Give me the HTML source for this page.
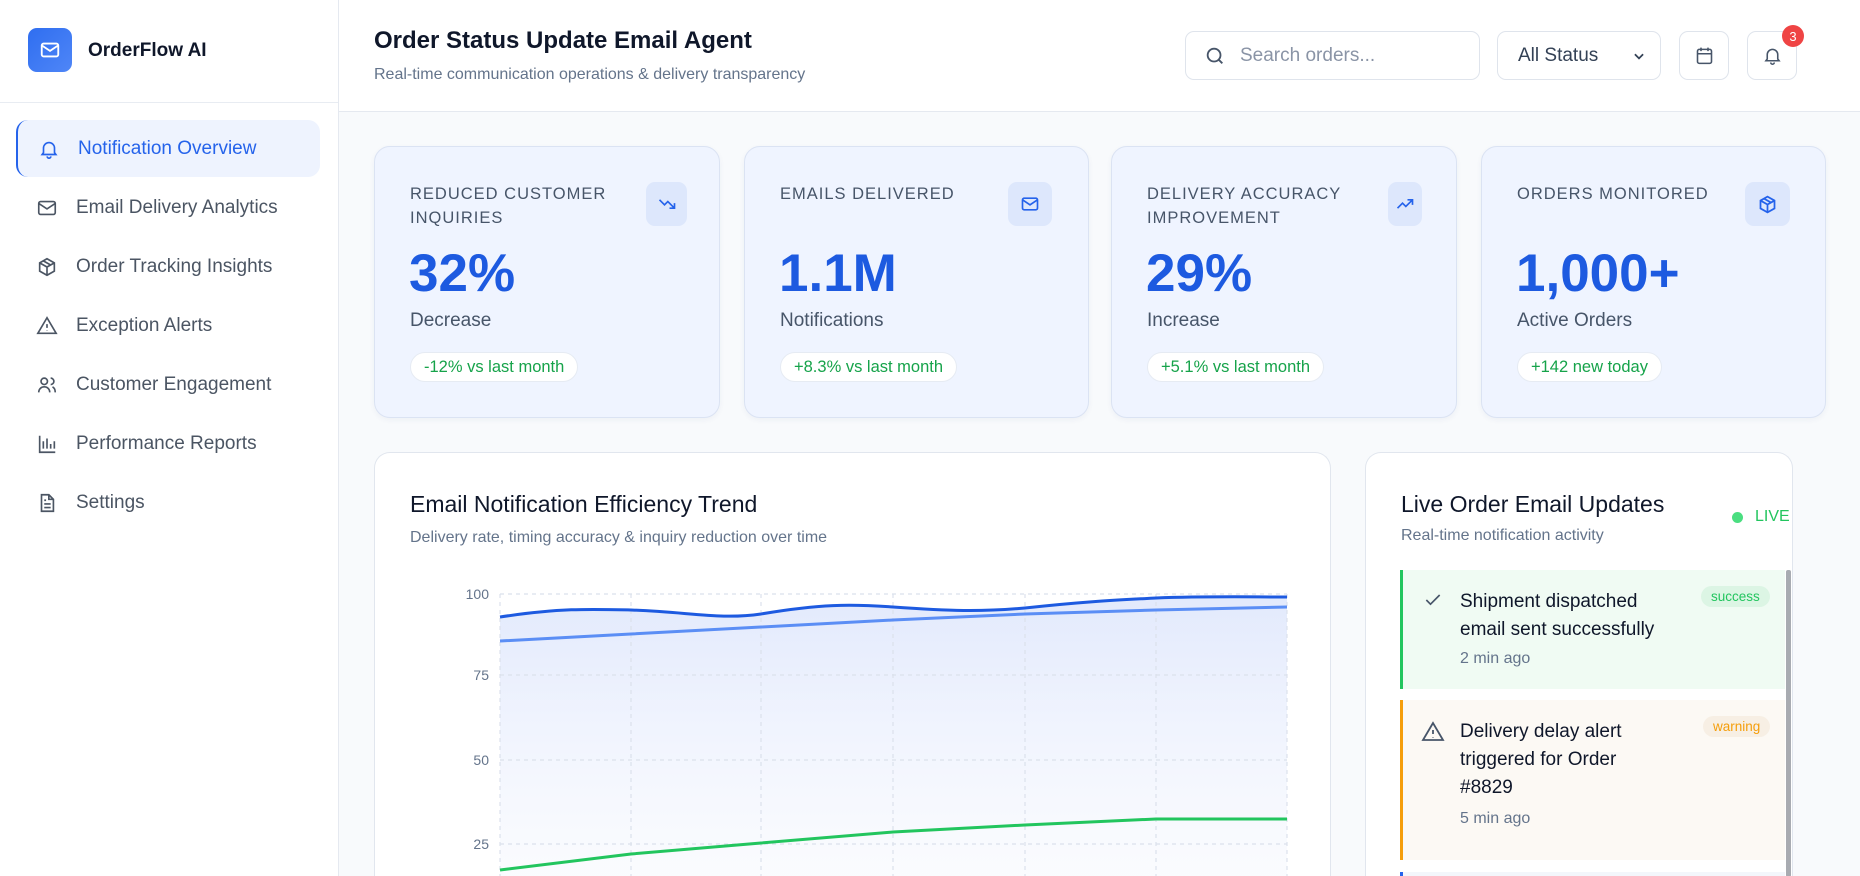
<!DOCTYPE html>
<html style="overflow:hidden;height:876px"><head><meta charset="utf-8"><style>
*{box-sizing:border-box;margin:0;padding:0}
body{width:1860px;height:876px;overflow:hidden;background:#fff;font-family:"Liberation Sans",sans-serif;color:#0f172a;position:relative}
.side{position:absolute;left:0;top:0;width:339px;height:876px;background:#fff;border-right:1px solid #e5e9f0}
.logo{position:absolute;left:28px;top:28px;width:44px;height:44px;border-radius:9px;background:linear-gradient(135deg,#2f6ef0,#4f86f7);display:flex;align-items:center;justify-content:center}
.brand{position:absolute;left:88px;top:40px;font-size:19px;font-weight:bold;color:#0f172a}
.sdiv{position:absolute;left:0;top:102px;width:338px;border-top:1px solid #e8ecf2}
.nav{position:absolute;left:16px;width:304px;height:57px;display:flex;align-items:center;padding-left:20px;font-size:19px;color:#4b5563;border-radius:12px}
.nav svg{margin-right:18px}
.nav.act{background:#eef3fe;color:#2563eb;border-left:2px solid #2563eb}
.main{position:absolute;left:339px;top:0;right:0;height:876px;background:#f8fafc;overflow:hidden}
.hdr{position:absolute;left:0;top:0;right:0;height:112px;background:#fff;border-bottom:1px solid #e5e9f0}
.h1{position:absolute;left:35px;top:27px;font-size:24px;font-weight:bold}
.h2{position:absolute;left:35px;top:66px;font-size:16px;color:#64748b}
.box{position:absolute;top:31px;height:49px;border:1px solid #dfe4ec;border-radius:9px;background:#fff;display:flex;align-items:center;justify-content:center}
.card{position:absolute;top:146px;width:346px;height:272px;background:#eff4ff;border:1px solid #dbe3f3;border-radius:16px;box-shadow:0 2px 6px rgba(30,60,120,.05)}
.lbl{position:absolute;left:35px;top:35px;width:210px;font-size:16.5px;letter-spacing:1px;color:#475569;line-height:24px}
.ic{position:absolute;left:271px;top:35px;width:41px;height:44px;border-radius:9px;background:#dde7fc;display:flex;align-items:center;justify-content:center}
.big{position:absolute;left:34px;top:96px;font-size:53px;font-weight:bold;color:#1d5ae0}
.sub{position:absolute;left:35px;top:163px;font-size:19px;color:#475569}
.pill{position:absolute;left:35px;top:205px;height:30px;padding:0 13px;border-radius:15px;background:#fff;color:#16a34a;font-size:16.5px;display:flex;align-items:center;border:1px solid #e6ebf3}
.pnl{position:absolute;top:452px;height:424px;background:#fff;border:1px solid #e1e6ee;border-bottom:none;border-radius:16px 16px 0 0;overflow:hidden}
</style></head><body>
<div class="side">
 <div class="logo"><svg width="22" height="22" viewBox="0 0 24 24" fill="none" stroke="#fff" stroke-width="2"><rect x="3" y="5" width="18" height="14" rx="2"/><path d="M3 7l9 6 9-6"/></svg></div>
 <div class="brand">OrderFlow AI</div>
 <div class="sdiv"></div>
 <div class="nav act" style="top:120px"><svg width="22" height="22" viewBox="0 0 24 24" fill="none" stroke="#2563eb" stroke-width="1.8"><path d="M6 16V11a6 6 0 0112 0v5l1.5 2h-15z"/><path d="M10 20a2 2 0 004 0"/></svg>Notification Overview</div>
 <div class="nav" style="top:179px"><svg width="22" height="22" viewBox="0 0 24 24" fill="none" stroke="#4b5563" stroke-width="1.8"><rect x="3" y="5" width="18" height="14" rx="2"/><path d="M3 7l9 6 9-6"/></svg>Email Delivery Analytics</div>
 <div class="nav" style="top:238px"><svg width="22" height="22" viewBox="0 0 24 24" fill="none" stroke="#4b5563" stroke-width="1.8"><path d="M12 3l8 4.5v9L12 21l-8-4.5v-9z"/><path d="M4 7.5l8 4.5 8-4.5M12 12v9M8 5.3l8 4.5"/></svg>Order Tracking Insights</div>
 <div class="nav" style="top:297px"><svg width="22" height="22" viewBox="0 0 24 24" fill="none" stroke="#4b5563" stroke-width="1.8"><path d="M12 3L2 20h20z"/><path d="M12 10v4M12 17v.5"/></svg>Exception Alerts</div>
 <div class="nav" style="top:356px"><svg width="22" height="22" viewBox="0 0 24 24" fill="none" stroke="#4b5563" stroke-width="1.8"><circle cx="9" cy="8" r="3.5"/><path d="M3 20c0-4 3-6 6-6s6 2 6 6M16 4.5a3.5 3.5 0 010 7M18 14c2 1 3 3 3 6"/></svg>Customer Engagement</div>
 <div class="nav" style="top:415px"><svg width="22" height="22" viewBox="0 0 24 24" fill="none" stroke="#4b5563" stroke-width="1.8"><path d="M4 3v18h17M8 17V9M12 17V6M16 17v-5M20 17v-8"/></svg>Performance Reports</div>
 <div class="nav" style="top:474px"><svg width="22" height="22" viewBox="0 0 24 24" fill="none" stroke="#4b5563" stroke-width="1.8"><path d="M6 3h8l5 5v13H6z"/><path d="M14 3v5h5M9 13h7M9 17h7M9 9h2"/></svg>Settings</div>
</div>
<div class="main">
 <div class="hdr">
  <div class="h1">Order Status Update Email Agent</div>
  <div class="h2">Real-time communication operations &amp; delivery transparency</div>
  <div class="box" style="left:846px;width:295px;justify-content:flex-start;padding-left:18px"><svg width="22" height="22" viewBox="0 0 24 24" fill="none" stroke="#475569" stroke-width="2"><circle cx="11" cy="11" r="7"/><path d="M16 16l4 4"/></svg><span style="margin-left:14px;font-size:19px;color:#8a94a6">Search orders...</span></div>
  <div class="box" style="left:1158px;width:164px;justify-content:space-between;padding:0 14px 0 20px;font-size:19px;color:#334155">All Status<svg width="14" height="14" viewBox="0 0 24 24" fill="none" stroke="#334155" stroke-width="3"><path d="M5 9l7 7 7-7"/></svg></div>
  <div class="box" style="left:1340px;width:50px"><svg width="21" height="21" viewBox="0 0 24 24" fill="none" stroke="#475569" stroke-width="1.8"><rect x="4" y="5" width="16" height="16" rx="2"/><path d="M4 10h16M8 3v4M16 3v4"/></svg></div>
  <div class="box" style="left:1408px;width:50px"><svg width="21" height="21" viewBox="0 0 24 24" fill="none" stroke="#475569" stroke-width="1.8"><path d="M6 16V11a6 6 0 0112 0v5l1.5 2h-15z"/><path d="M10 20a2 2 0 004 0"/></svg></div>
  <div style="position:absolute;left:1443px;top:25px;width:22px;height:22px;border-radius:11px;background:#ef4444;color:#fff;font-size:13px;display:flex;align-items:center;justify-content:center">3</div>
 </div>
 <div class="card" style="left:35px"><div class="lbl">REDUCED CUSTOMER INQUIRIES</div><div class="ic"><svg width="20" height="20" viewBox="0 0 24 24" fill="none" stroke="#2563eb" stroke-width="2"><path d="M3 7l6 6 4-4 8 8M15 17h6v-6"/></svg></div><div class="big">32%</div><div class="sub">Decrease</div><div class="pill">-12% vs last month</div></div>
 <div class="card" style="left:405px;width:345px"><div class="lbl">EMAILS DELIVERED</div><div class="ic" style="width:44px;left:263px"><svg width="20" height="20" viewBox="0 0 24 24" fill="none" stroke="#2563eb" stroke-width="2"><rect x="3" y="5" width="18" height="14" rx="2"/><path d="M3 7l9 6 9-6"/></svg></div><div class="big">1.1M</div><div class="sub">Notifications</div><div class="pill">+8.3% vs last month</div></div>
 <div class="card" style="left:772px"><div class="lbl">DELIVERY ACCURACY IMPROVEMENT</div><div class="ic" style="left:276px;width:34px"><svg width="20" height="20" viewBox="0 0 24 24" fill="none" stroke="#2563eb" stroke-width="2"><path d="M3 17l6-6 4 4 8-8M15 7h6v6"/></svg></div><div class="big">29%</div><div class="sub">Increase</div><div class="pill">+5.1% vs last month</div></div>
 <div class="card" style="left:1142px;width:345px"><div class="lbl">ORDERS MONITORED</div><div class="ic" style="left:263px;width:45px"><svg width="21" height="21" viewBox="0 0 24 24" fill="none" stroke="#2563eb" stroke-width="2"><path d="M12 3l8 4.5v9L12 21l-8-4.5v-9z"/><path d="M4 7.5l8 4.5 8-4.5M12 12v9M8 5.3l8 4.5"/></svg></div><div class="big">1,000+</div><div class="sub">Active Orders</div><div class="pill">+142 new today</div></div>

 <div class="pnl" style="left:35px;width:957px">
  <div style="position:absolute;left:35px;top:38px;font-size:23px;color:#0f172a">Email Notification Efficiency Trend</div>
  <div style="position:absolute;left:35px;top:76px;font-size:16px;color:#64748b">Delivery rate, timing accuracy &amp; inquiry reduction over time</div>
 </div>
 <svg style="position:absolute;left:0;top:0" width="1521" height="876" viewBox="339 0 1521 876">
  <defs><linearGradient id="g" x1="0" y1="0" x2="0" y2="1"><stop offset="0" stop-color="#dfe7fc" stop-opacity=".9"/><stop offset="1" stop-color="#f3f6fe" stop-opacity=".4"/></linearGradient></defs>
  <path d="M500 617 C560 608,590 609,631 610 C690 612,720 620,761 614 C820 604,850 604,893 607 C950 611,980 612,1025 608 C1090 601,1120 600,1156 598 C1210 596,1250 597,1287 597 L1287 876 L500 876Z" fill="url(#g)"/>
  <g stroke="#dbe1ec" stroke-dasharray="4 4" stroke-width="1.2" fill="none">
   <path d="M500 594H1287M500 675H1287M500 760H1287M500 844H1287"/>
   <path d="M500 594V876M631 594V876M761 594V876M893 594V876M1025 594V876M1156 594V876M1287 594V876"/>
  </g>
  <g font-size="14" fill="#64748b" text-anchor="end" font-family="Liberation Sans,sans-serif">
   <text x="489" y="599">100</text><text x="489" y="680">75</text><text x="489" y="765">50</text><text x="489" y="849">25</text>
  </g>
  <path d="M500 617 C560 608,590 609,631 610 C690 612,720 620,761 614 C820 604,850 604,893 607 C950 611,980 612,1025 608 C1090 601,1120 600,1156 598 C1210 596,1250 597,1287 597" fill="none" stroke="#1d5ae0" stroke-width="3"/>
  <path d="M500 641 L631 634 L761 627 L893 620 L1025 614 L1156 610 L1287 607" fill="none" stroke="#5b8ef5" stroke-width="3"/>
  <path d="M500 870 L631 854 L761 843 L893 832 L1025 825 L1156 819 L1287 819" fill="none" stroke="#22c55e" stroke-width="3"/>
 </svg>

 <div class="pnl" style="left:1026px;width:428px">
  <div style="position:absolute;left:35px;top:38px;font-size:23px;color:#0f172a">Live Order Email Updates</div>
  <div style="position:absolute;left:35px;top:74px;font-size:16px;color:#64748b">Real-time notification activity</div>
  <div style="position:absolute;left:366px;top:59px;width:11px;height:11px;border-radius:6px;background:#4ade80"></div>
  <div style="position:absolute;left:389px;top:55px;font-size:16px;color:#22c55e">LIVE</div>
  <div style="position:absolute;left:420px;top:117px;width:5px;height:307px;background:#a8abb1;border-radius:2px"></div>
  <div style="position:absolute;left:34px;top:117px;width:385px;height:119px;background:#f0fbf3;border-left:3px solid #22c55e">
   <svg style="position:absolute;left:20px;top:20px" width="20" height="20" viewBox="0 0 24 24" fill="none" stroke="#475569" stroke-width="2"><path d="M4 12l5 5 11-11"/></svg>
   <div style="position:absolute;left:57px;top:18px;font-size:19px;line-height:28px;color:#0f172a">Shipment dispatched<br>email sent successfully</div>
   <div style="position:absolute;left:57px;top:80px;font-size:16px;color:#64748b">2 min ago</div>
   <div style="position:absolute;left:298px;top:16px;padding:3px 10px;border-radius:12px;background:#dcf5e4;color:#22c55e;font-size:13.5px">success</div>
  </div>
  <div style="position:absolute;left:34px;top:247px;width:385px;height:160px;background:#fcf9f4;border-left:3px solid #f59e0b">
   <svg style="position:absolute;left:18px;top:20px" width="24" height="24" viewBox="0 0 24 24" fill="none" stroke="#475569" stroke-width="1.8"><path d="M12 3L2 20h20z"/><path d="M12 10v4M12 17v.5"/></svg>
   <div style="position:absolute;left:57px;top:18px;font-size:19px;line-height:28px;color:#0f172a">Delivery delay alert<br>triggered for Order<br>#8829</div>
   <div style="position:absolute;left:57px;top:110px;font-size:16px;color:#64748b">5 min ago</div>
   <div style="position:absolute;left:300px;top:16px;padding:3px 10px;border-radius:12px;background:#f7efe4;color:#f59e0b;font-size:13.5px">warning</div>
  </div>
  <div style="position:absolute;left:34px;top:419px;width:385px;height:5px;background:#f3f6fb;border-left:3px solid #2563eb"></div>
 </div>
</div>
</body></html>
